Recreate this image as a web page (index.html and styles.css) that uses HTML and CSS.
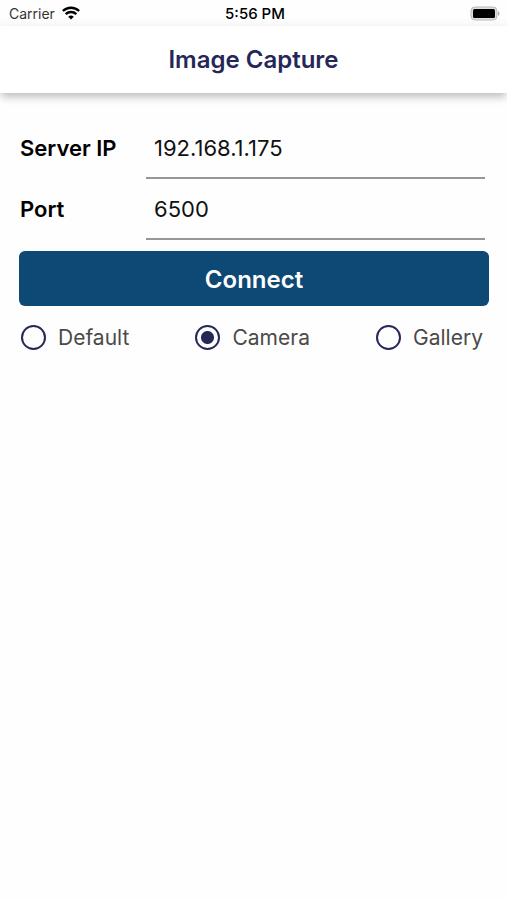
FILE: index.html
```html
<!DOCTYPE html>
<html lang="en">
<head>
<meta charset="utf-8">
<meta name="viewport" content="width=device-width, initial-scale=1">
<title>Image Capture</title>
<link rel="stylesheet" href="styles.css">
</head>
<body>
<div class="status">
  <div class="carrier">
    <span>Carrier</span>
    <svg class="wifi" viewBox="0 0 18 14" aria-hidden="true">
      <path d="M.9 5a11.6 11.6 0 0 1 16.2 0M3.7 8.1a7.6 7.6 0 0 1 10.6 0" fill="none" stroke="#000" stroke-width="2.4"/>
      <path d="M9 13.6 6.2 10.8a4 4 0 0 1 5.6 0z"/>
    </svg>
  </div>
  <time class="clock">5:56 PM</time>
  <svg class="battery" viewBox="0 0 31 15" aria-hidden="true">
    <rect x="1" y="1" width="26" height="13" rx="4" fill="#e0e0e0" stroke="#bababa"/>
    <rect x="3" y="3" width="22" height="9" rx="1.5"/>
    <path d="M28 5.2a2.5 2.5 0 0 1 0 4.6z" fill="#aaa"/>
  </svg>
</div>
<header class="header"><h1>Image Capture</h1></header>
<main>
  <form class="form">
    <div class="field">
      <label for="server">Server IP</label>
      <input id="server" type="text" value="192.168.1.175">
    </div>
    <div class="field">
      <label for="port">Port</label>
      <input id="port" type="text" value="6500">
    </div>
    <button class="connect" type="button">Connect</button>
    <div class="sources" role="radiogroup" aria-label="Source">
      <label><input type="radio" name="source">Default</label>
      <label><input type="radio" name="source" checked>Camera</label>
      <label><input type="radio" name="source">Gallery</label>
    </div>
  </form>
</main>
</body>
</html>
```
FILE: styles.css
```css
* {
  box-sizing: border-box;
}

body {
  margin: 0;
  background: #fefefe;
  color: #000;
  font-family: Inter, "Liberation Sans", sans-serif;
}

.status {
  display: grid;
  grid-template-columns: 1fr auto 1fr;
  align-items: center;
  height: 26px;
  padding: 0 6px 0 9px;
  font-size: 14px;
  background: linear-gradient(#fefefe 18px, #f8f8f8);
}

.carrier {
  display: flex;
  align-items: center;
  gap: 7px;
  color: #333;
}

.wifi {
  width: 18px;
  height: 14px;
}

.clock {
  font-size: 15px;
  font-weight: 500;
}

.battery {
  justify-self: end;
  width: 31px;
  height: 15px;
}

.header {
  display: flex;
  align-items: center;
  justify-content: center;
  height: 67px;
  background: #fff;
  box-shadow: 0 5px 8px -1px rgba(0, 0, 0, 0.25);
}

.header h1 {
  margin: 0;
  color: #262759;
  font-size: 24px;
  font-weight: 600;
}

.form {
  padding: 25px 18px 0 19px;
}

.field {
  display: flex;
  align-items: center;
  height: 61px;
  padding-right: 4px;
}

.field label {
  flex: 0 0 127px;
  padding: 0 0 2px 1px;
  font-size: 22px;
  font-weight: 600;
}

.field input {
  flex: 1;
  min-width: 0;
  height: 100%;
  padding: 0 8px;
  border: 0;
  border-bottom: 2px solid #969696;
  background: none;
  color: #111;
  font: inherit;
  font-size: 22px;
}

.connect {
  display: block;
  width: 100%;
  height: 55px;
  margin-top: 11px;
  padding: 2px 0 0;
  border: 0;
  border-radius: 6px;
  background: #0e4875;
  color: #fff;
  font: inherit;
  font-size: 24px;
  font-weight: 600;
}

.sources {
  display: flex;
  justify-content: space-between;
  padding: 19px 6px 0 2px;
}

.sources label {
  display: flex;
  align-items: center;
  gap: 12px;
  color: #4a4a4a;
  font-size: 21px;
}

.sources input {
  appearance: none;
  width: 25px;
  height: 25px;
  margin: 0;
  border: 2px solid #262759;
  border-radius: 50%;
}

.sources input:checked {
  background: radial-gradient(circle, #262759 6px, transparent 7px);
}
```
